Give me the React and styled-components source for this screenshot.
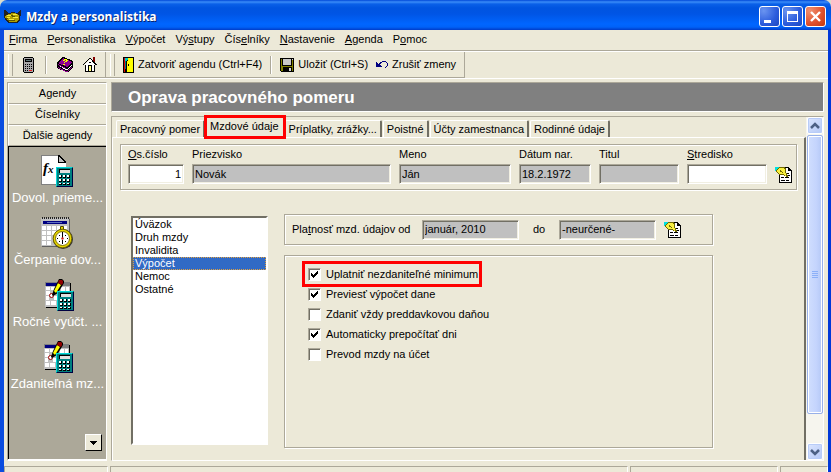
import React, { useState } from "react"
import styled, { createGlobalStyle, css } from "styled-components"

const menu = [
  ["", "F", "irma"],
  ["", "P", "ersonalistika"],
  ["", "V", "ýpočet"],
  ["Vý", "s", "tupy"],
  ["Čís", "e", "lníky"],
  ["", "N", "astavenie"],
  ["", "A", "genda"],
  ["P", "o", "moc"],
]

const tabs = [
  "Pracovný pomer",
  "Mzdové údaje",
  "Príplatky, zrážky...",
  "Poistné",
  "Účty zamestnanca",
  "Rodinné údaje",
]

const sections = ["Úväzok", "Druh mzdy", "Invalidita", "Výpočet", "Nemoc", "Ostatné"]

const options = [
  { id: "minimum", label: "Uplatniť nezdaniteľné minimum", checked: true, marked: true },
  { id: "dan", label: "Previesť výpočet dane", checked: true },
  { id: "preddavok", label: "Zdaniť vždy preddavkovou daňou", checked: false },
  { id: "dni", label: "Automaticky prepočítať dni", checked: true },
  { id: "ucet", label: "Prevod mzdy na účet", checked: false },
]

export default function App() {
  const [tab, setTab] = useState("Mzdové údaje")
  const [section, setSection] = useState("Výpočet")

  return (
    <>
      <GlobalStyle />
      <Window>
        <TitleBar>
          <LogoIcon />
          <h1>Mzdy a personalistika</h1>
          <WindowButton aria-label="Minimalizovať"><MinimizeIcon /></WindowButton>
          <WindowButton aria-label="Maximalizovať"><MaximizeIcon /></WindowButton>
          <WindowButton $close aria-label="Zavrieť"><CloseIcon /></WindowButton>
        </TitleBar>
        <Frame>
          <MenuBar>
            {menu.map(([before, key, after]) => (
              <button key={before + key + after}>{before}<u>{key}</u>{after}</button>
            ))}
          </MenuBar>
          <ToolBars>
            <ToolBar>
              <IconButton aria-label="Kalkulačka"><CalculatorIcon /></IconButton>
              <Separator />
              <IconButton aria-label="Pomocník"><BookIcon /></IconButton>
              <IconButton aria-label="Domov"><HouseIcon /></IconButton>
            </ToolBar>
            <ToolBar $tight>
              <ToolButton><DoorIcon />Zatvoriť agendu (Ctrl+F4)</ToolButton>
              <Separator />
              <ToolButton><DiskIcon />Uložiť (Ctrl+S)</ToolButton>
              <ToolButton><UndoIcon />Zrušiť zmeny</ToolButton>
            </ToolBar>
          </ToolBars>
          <Main>
            <SideBar>
              <SideButton>Agendy</SideButton>
              <SideButton>Číselníky</SideButton>
              <SideButton>Ďalšie agendy</SideButton>
              <Shortcuts>
                <Shortcut><FormulaIcon />Dovol. prieme...</Shortcut>
                <Shortcut><ClockIcon />Čerpanie dov...</Shortcut>
                <Shortcut><SheetIcon />Ročné vyúčt. ...</Shortcut>
                <Shortcut><SheetIcon />Zdaniteľná mz...</Shortcut>
                <MoreButton aria-label="Ďalšie">
                  <svg width="7" height="4" shapeRendering="crispEdges"><path d="M0 0h7v1h-1v1h-1v1h-1v1h-1v-1h-1v-1h-1v-1h-1z" /></svg>
                </MoreButton>
              </Shortcuts>
            </SideBar>
            <Content>
              <Heading>Oprava pracovného pomeru</Heading>
              <Panel>
                <Page>
                  <Tabs role="tablist">
                    {tabs.map((name) => (
                      <Tab key={name} role="tab" aria-selected={name === tab} $active={name === tab} onClick={() => setTab(name)}>
                        {name}
                      </Tab>
                    ))}
                  </Tabs>
                  <Sheet>
                    <Person>
                      <Field><span><u>O</u>s.číslo</span><Input $right defaultValue="1" /></Field>
                      <Field>Priezvisko<Input readOnly value="Novák" /></Field>
                      <Field>Meno<Input readOnly value="Ján" /></Field>
                      <Field>Dátum nar.<Input readOnly value="18.2.1972" /></Field>
                      <Field>Titul<Input readOnly value="" /></Field>
                      <Field><span><u>S</u>tredisko</span><Input defaultValue="" /></Field>
                      <IconButton aria-label="Vybrať stredisko"><PickIcon /></IconButton>
                    </Person>
                    <Details>
                      <List size={12} aria-label="Skupina údajov" value={section} onChange={(e) => setSection(e.target.value)}>
                        {sections.map((name) => <option key={name}>{name}</option>)}
                      </List>
                      <Column>
                        <Validity>
                          <label htmlFor="from">Pla<u>t</u>nosť mzd. údajov od</label>
                          <Input id="from" readOnly value="január, 2010" />
                          <ToLabel htmlFor="to">do</ToLabel>
                          <Input id="to" readOnly value="-neurčené-" />
                          <IconButton aria-label="Zmeniť platnosť"><PickIcon /></IconButton>
                        </Validity>
                        <Options>
                          {options.map((o) => (
                            <Option key={o.id} $marked={o.marked}>
                              <input type="checkbox" defaultChecked={o.checked} />
                              {o.label}
                            </Option>
                          ))}
                        </Options>
                      </Column>
                    </Details>
                  </Sheet>
                </Page>
                <ScrollBar>
                  <ScrollButton aria-label="Hore"><Chevron d="M1 6 5 2 9 6" /></ScrollButton>
                  <Thumb><i /><i /><i /><i /></Thumb>
                  <Track />
                  <ScrollButton aria-label="Dole"><Chevron d="M1 2 5 6 9 2" /></ScrollButton>
                </ScrollBar>
              </Panel>
            </Content>
          </Main>
          <StatusBar><div /><div /><div /><div /></StatusBar>
        </Frame>
      </Window>
    </>
  )
}

function LogoIcon() {
  return (
    <svg width="17" height="16" viewBox="0 0 17 16" shapeRendering="crispEdges">
      <path d="M0 1h1l3 3h2l2-1h2l2 1h1l3-3h1v5l-1 1v4l-3 3H5l-3-2-2-4z" fill="#222" />
      <path d="M2 6l3-1 3-1h2l3 1 2 1v4l-3 3H6l-3-2-2-3z" fill="#b0a000" />
      <path d="M3 6h4v1H3zM9 5h4v1H9zM3 8h3v1H3zM9 8h5v1H9zM5 10h5v1H5z" fill="#f4e840" />
      <path d="M7 6h2v1h2v1H8V7H7zM4 11h7v1H4zM2 9h2v1H2z" fill="#5c5400" />
    </svg>
  )
}

function MinimizeIcon() {
  return <svg width="19" height="19"><path d="M4 13h7v3H4z" fill="#fff" /></svg>
}

function MaximizeIcon() {
  return <svg width="19" height="19"><path d="M4 4h11v11H4zM5 7v7h9V7z" fill="#fff" fillRule="evenodd" /></svg>
}

function CloseIcon() {
  return <svg width="19" height="19"><path d="M5 5l9 9M14 5l-9 9" stroke="#fff" strokeWidth="2.4" /></svg>
}

function CalculatorIcon() {
  return (
    <svg width="12" height="16" viewBox="0 0 12 16" shapeRendering="crispEdges">
      <path d="M1 0h9v1h1v14h-1v1H1v-1H0V1h1z" />
      <path d="M1 1h9v14H1z" fill="#a8a8a8" />
      <path d="M2 2h7v3H2z" />
      <path d="M3 3h5v1H3z" fill="#607878" />
      <path d="M2 7h1v1H2zM4 7h1v1H4zM6 7h1v1H6zM8 7h1v1H8zM2 9h1v1H2zM4 9h1v1H4zM6 9h1v1H6zM8 9h1v1H8zM2 11h1v1H2zM4 11h1v1H4zM6 11h1v1H6zM8 11h1v1H8zM2 13h1v1H2zM4 13h1v1H4z" />
      <path d="M6 13h3v1H6z" fill="#e02020" />
    </svg>
  )
}

function BookIcon() {
  return (
    <svg width="16" height="15" viewBox="0 0 16 15" shapeRendering="crispEdges">
      <path d="M5 0h2l9 4v6l-5 5H9L0 11V6z" />
      <path d="M6 1l9 4-5 5-9-4z" fill="#900090" />
      <path d="M1 8l8 4h1l5-5v2l-5 4H9L2 9z" fill="#fff" />
      <path d="M1 7l8 4v1L1 8zM1 10l8 4h1l5-5v1l-5 5H9l-8-4z" fill="#900090" />
      <path d="M6 3h1V2h3v1h1v1h-1v1H8v1H7V5h1V4h1V3H8v1H6zM6 7h2v1H6z" fill="#ffff00" />
    </svg>
  )
}

function HouseIcon() {
  return (
    <svg width="14" height="15" viewBox="0 0 14 15" shapeRendering="crispEdges">
      <path d="M2 7l5-5 5 5v7H2z" fill="#fff" />
      <path d="M10 0h2v5h-2z" fill="#800000" />
      <path d="M0 8V7h1V6h1V5h1V4h1V3h1V2h1V1h2v1h1v1h1v1h1v1h1v1h1v1h1v1h-2V7h-1V6h-1V5h-1V4H9V3H8V2H6v1H5v1H4v1H3v1H2v1h-1v1z" />
      <path d="M2 8h1v6h2V8h4v6h2V8h1v7H2zM6 9v5h2V9zM6 5h2v1H6z" />
      <path d="M6 9h2v5H6z" fill="#ffff80" />
    </svg>
  )
}

function DoorIcon() {
  return (
    <svg width="11" height="16" viewBox="0 0 11 16" shapeRendering="crispEdges">
      <path d="M0 0h11v16H0z" />
      <path d="M1 1h1v14H1z" fill="#e00000" />
      <path d="M2 1h3v2H4v1H2z" fill="#00c8c8" />
      <path d="M2 4h1v8H2z" fill="#008080" />
      <path d="M5 1h5v14H4V4h1z" fill="#ffff00" />
      <path d="M5 7h1v2H5z" />
    </svg>
  )
}

function DiskIcon() {
  return (
    <svg width="14" height="14" viewBox="0 0 14 14" shapeRendering="crispEdges">
      <path d="M0 0h14v14H1v-1H0z" />
      <path d="M1 1h12v12H1z" fill="#808000" />
      <path d="M2 0h1v7h8V0h1v8H2z" />
      <path d="M3 1h8v6H3z" fill="#c8c8c8" />
      <path d="M3 9h9v5H3z" />
      <path d="M9 10h2v3H9zM12 1h1v1h-1z" fill="#d8d8d8" />
    </svg>
  )
}

function UndoIcon() {
  return (
    <svg width="12" height="8" viewBox="0 0 12 8" shapeRendering="crispEdges">
      <path d="M0 1h1v1h1v1h1V2h1V1h2V0h4v1h1v1h1v3h-1v1h-1v1H9V6h1V5h1V2h-1V1H6v1H5v1H4v1h1v1h1v1H0z" fill="#000080" />
    </svg>
  )
}

/* teal calculator shared by the large shortcut icons */
function Calculator() {
  return (
    <g>
      <path d="M15 12h17v20H15z" fill="#008080" />
      <path d="M31 13h1v19H16v-1h15z" fill="#000040" />
      <path d="M15 12h16v1H16v18h-1z" fill="#00d8d8" />
      <path d="M18 14h11v4H18z" />
      <path d="M19 15h10v3H19z" fill="#e0e0e0" />
      <path d="M18 20h3v3h-3zM22 20h3v3h-3zM26 20h3v3h-3zM18 24h3v3h-3zM22 24h3v3h-3zM26 24h3v3h-3zM18 28h3v2h-3zM22 28h3v2h-3zM26 28h3v2h-3z" />
      <path d="M18 20h2v2h-2zM22 20h2v2h-2zM26 20h2v2h-2zM18 24h2v2h-2zM22 24h2v2h-2zM26 24h2v2h-2zM18 28h2v1h-2zM22 28h2v1h-2zM26 28h2v1h-2z" fill="#fff" />
    </g>
  )
}

function FormulaIcon() {
  return (
    <svg width="32" height="32" viewBox="0 0 32 32" shapeRendering="crispEdges">
      <path d="M0 0h18l7 7v23H0z" fill="#fff" />
      <path d="M0 0h18v1H1v28H0zM0 29h16v1H0z" fill="#808080" />
      <path d="M17 0h1l7 7v1h-8z" />
      <path d="M18 2l5 5h-5z" fill="#c0c0c0" />
      <text x="2" y="18" fontFamily="Liberation Serif, serif" fontSize="15" fontStyle="italic" fontWeight="bold">f</text>
      <text x="7" y="18" fontFamily="Liberation Serif, serif" fontSize="11" fontStyle="italic" fontWeight="bold">x</text>
      <Calculator />
    </svg>
  )
}

function ClockIcon() {
  return (
    <svg width="32" height="32" viewBox="0 0 32 32" shapeRendering="crispEdges">
      <path d="M1 2h28v28H1z" fill="#606060" />
      <path d="M0 1h28v28H0z" fill="#c0c0c0" />
      <path d="M1 1h27" stroke="#222" strokeWidth="2" strokeDasharray="1 1" />
      <path d="M2 4h24v3H2z" fill="#000080" />
      <path d="M6 5h15v1H6z" fill="#6070c0" />
      <path d="M1 9h4v4H1zM6 9h4v4H6zM11 9h4v4h-4zM16 9h4v4h-4zM21 9h5v4h-5zM1 14h4v4H1zM6 14h4v4H6zM11 14h4v4h-4zM1 19h4v4H1zM6 19h4v4H6zM1 24h4v4H1zM6 24h4v4H6z" fill="#fff" />
      <g shapeRendering="auto">
        <path d="M19.500 9.500h3v3h-3z" fill="#e8d800" stroke="#504800" />
        <circle cx="22" cy="22" r="10" fill="#333" />
        <circle cx="21.500" cy="21.500" r="9.300" fill="#e8d800" stroke="#706400" />
        <circle cx="21.500" cy="21.500" r="7" fill="#fff" stroke="#807000" />
        <path d="M21.500 15v7M21.500 23v4" stroke="#000" />
        <path d="M16 21.500h1M26 21.500h1M18 18l1 1M25 18l-1 1M18 25l1-1M25 25l-1-1" stroke="#000" />
        <circle cx="21.500" cy="21.500" r="1.200" fill="#d02020" />
      </g>
    </svg>
  )
}

function SheetIcon() {
  return (
    <svg width="32" height="32" viewBox="0 0 32 32" shapeRendering="crispEdges">
      <path d="M4 4h25v25H4z" />
      <path d="M3 3h25v25H3z" fill="#c0c0c0" />
      <path d="M3 3h25v4H3z" fill="#808080" />
      <path d="M4 4h11v3H4z" fill="#000080" />
      <path d="M4 8h4v3H4zM9 8h4v3H9zM4 12h4v4H4zM19 8h4v4h-4zM24 8h3v4h-3zM4 17h3v4H4zM4 22h4v4H4zM9 22h5v4H9zM12 17h3v4h-3z" fill="#fff" />
      <g shapeRendering="auto">
        <circle cx="9.500" cy="16.500" r="2" fill="#fff" stroke="#a00000" />
        <path d="M17 0h3l2 2v2l-6 10-5 3-1-1 2-6z" />
        <path d="M16 4l3 2-5 8-2-2z" fill="#ffff00" />
        <path d="M17 1h3l1 1v2l-1 2-4-2z" fill="#900000" />
      </g>
      <Calculator />
    </svg>
  )
}

function PickIcon() {
  return (
    <svg width="18" height="18" viewBox="0 0 18 18" shapeRendering="crispEdges">
      <path d="M4 1h10v1h1v1h1v1h1v13H4z" />
      <path d="M5 2h8v3h3v11H5z" fill="#fff" />
      <path d="M14 3h1v1h-1zM6 11h3v1H6zM10 11h4v1h-4zM6 14h4v1H6zM11 14h3v1h-3zM12 7h2v1h-2zM12 9h3v1h-3z" />
      <path d="M0 1h4v1H3v1H2v1H1v1H0z" fill="#00e0e0" />
      <path d="M1 4h1V3h1V2h1V1h6v1h1v5h1v2h1v2h-2v-1H9V9H4V8H3V7H2V6H1z" fill="#706800" />
      <path d="M2 4h1V3h1V2h5v1h1v4h1v3h-1V9H9V8H4V7H3V6H2z" fill="#f8f040" />
      <path d="M5 4h1v1h1v1h1v1H7V6H5z" fill="#706800" />
    </svg>
  )
}

function Chevron({ d }) {
  return <svg width="10" height="8"><path d={d} fill="none" stroke="#4d6185" strokeWidth="2.500" /></svg>
}

const GlobalStyle = createGlobalStyle`
  * {
    box-sizing: border-box;
  }

  body {
    margin: 0;
    background: #dcdccc;
    color: #000;
    font: 11px/13px "Liberation Sans", Arial, sans-serif;
    overflow: hidden;
  }

  button, input, select {
    font: inherit;
    color: inherit;
  }

  button {
    border: 0;
    padding: 0;
    background: none;
    white-space: nowrap;
  }

  svg {
    display: block;
    flex: none;
  }
`

const etched = css`
  border: 1px solid #aca899;
  box-shadow: 1px 1px 0 #fff, inset 1px 1px 0 #fff;
`

const Window = styled.div`
  display: flex;
  flex-direction: column;
  height: 100vh;
  border-radius: 7px 7px 0 0;
  overflow: hidden;
  background: #ece9d8;
`

const TitleBar = styled.header`
  display: flex;
  flex: none;
  align-items: center;
  gap: 2px;
  height: 30px;
  padding: 3px 5px 0 4px;
  background: linear-gradient(#0048d8 0, #3a8cf8 2px, #0a60e8 4px, #0054e0 8px, #0055e5 14px, #0066ff 24px, #0062f8 27px, #003cc8 30px);

  h1 {
    flex: 1;
    margin: 0 0 0 3px;
    color: #fff;
    font: bold 12px/16px "Open Sans", sans-serif;
    text-shadow: 1px 1px 0 #0a246a;
  }
`

const WindowButton = styled.button`
  width: 21px;
  height: 21px;
  border: 1px solid #fff;
  border-radius: 3px;
  background: ${(props) => (props.$close
    ? "radial-gradient(circle at 20% 20%, #f09070, #e0502c 60%, #c03810)"
    : "radial-gradient(circle at 20% 20%, #6a94f0, #2c5cdc 60%, #1c48c0)")};
`

const Frame = styled.div`
  display: flex;
  flex: 1;
  flex-direction: column;
  min-height: 0;
  border-left: 4px solid #0a4ce0;
  border-right: 3px solid #0038d8;
`

const MenuBar = styled.nav`
  display: flex;
  gap: 10px;
  height: 21px;
  padding: 0 5px 1px;
  border-bottom: 1px solid #aca899;
`

const ToolBars = styled.div`
  display: flex;
  height: 28px;
  border-top: 1px solid #fff;
  border-bottom: 1px solid #fff;
`

const ToolBar = styled.div`
  display: flex;
  align-items: center;
  gap: ${(props) => (props.$tight ? "8px" : "10px")};
  padding: 0 8px 0 12px;
  border-right: 1px solid #aca899;
  border-bottom: 1px solid #aca899;

  &::before {
    content: "";
    width: 3px;
    height: 22px;
    margin-left: -8px;
    border-left: 1px solid #fff;
    border-right: 1px solid #aca899;
  }
`

const Separator = styled.span`
  width: 2px;
  height: 18px;
  border-left: 1px solid #aca899;
  border-right: 1px solid #fff;
`

const IconButton = styled.button`
  display: flex;
  align-items: center;
  justify-content: center;
`

const ToolButton = styled.button`
  display: flex;
  align-items: center;
  gap: 4px;
`

const Main = styled.main`
  display: flex;
  flex: 1;
  gap: 4px;
  min-height: 0;
  padding: 3px 4px 5px 3px;
`

const SideBar = styled.aside`
  display: flex;
  flex: none;
  flex-direction: column;
  width: 100px;
  border: 1px solid #aca899;
  border-right-color: #fff;
  border-bottom: 2px solid #fff;
`

const SideButton = styled.button`
  height: 21px;
  border-top: 1px solid #fff;
  border-left: 1px solid #fff;
  border-bottom: 1px solid #aca899;
`

const Shortcuts = styled.div`
  display: flex;
  flex: 1;
  flex-direction: column;
  align-items: center;
  gap: 12px;
  min-height: 0;
  padding: 8px 0;
  border-top: 1px solid #000;
  border-left: 1px solid #000;
  background: #aca899;
`

const Shortcut = styled.button`
  display: flex;
  flex-direction: column;
  align-items: center;
  gap: 4px;
  color: #fff;
  font-size: 13px;
  line-height: 14px;
`

const MoreButton = styled.button`
  display: flex;
  align-items: center;
  justify-content: center;
  width: 17px;
  height: 17px;
  margin: auto 4px 0 auto;
  border: 1px solid #fff;
  border-right-color: #000;
  border-bottom-color: #000;
  background: #ece9d8;
`

const Content = styled.div`
  display: flex;
  flex: 1;
  flex-direction: column;
  gap: 4px;
  min-width: 0;
`

const Heading = styled.h2`
  height: 30px;
  margin: 0;
  padding: 1px 16px 0;
  border: 1px solid #aca899;
  border-right-color: #fff;
  border-bottom-color: #fff;
  background: #808080;
  color: #fff;
  font-size: 17px;
  line-height: 28px;
`

const Panel = styled.section`
  display: flex;
  flex: 1;
  min-height: 0;
  border: 1px solid #aca899;
  border-right-color: #fff;
  border-bottom-color: #fff;
`

const Page = styled.div`
  display: flex;
  flex: 1;
  flex-direction: column;
  min-width: 0;
`

const Tabs = styled.div`
  display: flex;
  align-items: flex-end;
  gap: 1px;
  height: 20px;
  padding-left: 4px;
`

const Tab = styled.button`
  height: 17px;
  padding: 0 3px;
  border-top: 1px solid #fff;
  border-left: 1px solid #fff;
  border-right: 2px solid #716f64;
  border-radius: 2px 2px 0 0;

  ${(props) => props.$active && css`
    position: relative;
    height: 20px;
    padding-bottom: 3px;
    border-right-color: #ece9d8;
    background: #ece9d8;
    outline: 3px solid #ff0000;
    outline-offset: -1px;
    border-radius: 0;
  `}
`

const Sheet = styled.div`
  display: flex;
  flex: 1;
  flex-direction: column;
  min-height: 0;
  padding: 6px 7px 12px 7px;
  border-top: 1px solid #fff;
  border-left: 1px solid #fff;
  border-right: 2px solid #716f64;
`

const Person = styled.div`
  display: grid;
  grid-template-columns: 56px 1fr 112px 72px 80px 80px 18px;
  gap: 8px;
  align-items: end;
  height: 46px;
  padding: 0 3px 5px 7px;
  ${etched}
`

const Field = styled.label`
  display: flex;
  flex-direction: column;
  gap: 3px;
  min-width: 0;
`

const Input = styled.input`
  width: 100%;
  min-width: 0;
  height: 20px;
  padding: 0 2px 1px;
  border: 1px solid;
  border-color: #aca899 #fff #fff #aca899;
  border-radius: 0;
  outline: 0;
  background: ${(props) => (props.readOnly ? "#c0c0c0" : "#fff")};
  box-shadow: inset 1px 1px 0 #716f64, inset -1px -1px 0 #f1efe2;
  text-align: ${(props) => (props.$right ? "right" : "left")};
`

const Details = styled.div`
  display: flex;
  flex: 1;
  gap: 16px;
  min-height: 0;
  padding: 24px 0 0 11px;
`

const List = styled.select`
  width: 137px;
  margin: 2px 0 3px;
  padding: 0;
  border: 2px solid;
  border-color: #716f64 #fff #fff #716f64;
  border-radius: 0;
  outline: 0;
  background: #fff;
  overflow: hidden;

  option {
    min-height: 13px;
    padding: 0 2px;
    line-height: 13px;
  }

  option:checked {
    background: #316ac5 linear-gradient(#316ac5, #316ac5);
    color: #fff;
    outline: 1px dotted #e0a040;
    outline-offset: -1px;
  }
`

const Column = styled.div`
  display: flex;
  flex: 1;
  flex-direction: column;
  gap: 10px;
  max-width: 429px;
`

const Validity = styled.div`
  display: grid;
  grid-template-columns: 122px 97px 24px 97px 18px;
  column-gap: 8px;
  align-items: center;
  height: 31px;
  padding-left: 7px;
  white-space: nowrap;
  ${etched}
`

const ToLabel = styled.label`
  text-align: center;
`

const Options = styled.div`
  display: flex;
  flex: 1;
  flex-direction: column;
  align-items: flex-start;
  min-height: 0;
  padding: 8px 20px;
  ${etched}
`

const Option = styled.label`
  display: flex;
  align-items: center;
  gap: 5px;
  height: 20px;
  padding: 0 1px 0 3px;
  outline: ${(props) => (props.$marked ? "3px solid #ff0000" : "0")};

  input {
    appearance: none;
    width: 13px;
    height: 13px;
    margin: 0;
    border: 1px solid;
    border-color: #aca899 #fff #fff #aca899;
    background: #fff;
    box-shadow: inset 1px 1px 0 #716f64;
  }

  input:checked {
    background: #fff url("data:image/svg+xml,%3Csvg xmlns='http://www.w3.org/2000/svg' width='11' height='11' shape-rendering='crispEdges'%3E%3Cpath d='M2 4v3l2 2 5-5V1L4 6z'/%3E%3C/svg%3E");
  }
`

const ScrollBar = styled.div`
  display: flex;
  flex-direction: column;
  width: 17px;
  padding-left: 1px;
  background: #f6f5ee;
`

const ScrollButton = styled.button`
  display: flex;
  flex: none;
  align-items: center;
  justify-content: center;
  height: 17px;
  border: 1px solid #fff;
  border-radius: 2px;
  background: linear-gradient(135deg, #dce6ff, #b4c8f6);
  box-shadow: inset 0 0 0 1px #b8ccf8;
`

const Thumb = styled.div`
  display: flex;
  flex: 10;
  flex-direction: column;
  align-items: center;
  justify-content: center;
  gap: 1px;
  margin: 1px 0;
  border: 1px solid #98b0e8;
  border-radius: 2px;
  background: linear-gradient(90deg, #d0defe, #c4d4fd 60%, #b4c8f6);
  box-shadow: inset 0 0 0 1px #fff;

  i {
    width: 6px;
    height: 1px;
    background: #8cb0f8;
  }
`

const Track = styled.div`
  flex: 1;
`

const StatusBar = styled.footer`
  display: grid;
  grid-template-columns: 104px 7fr 2fr 48px;
  gap: 2px;
  height: 6px;

  div {
    border: 1px solid #aca899;
    border-right-color: #fff;
    border-bottom: 0;
  }
`
